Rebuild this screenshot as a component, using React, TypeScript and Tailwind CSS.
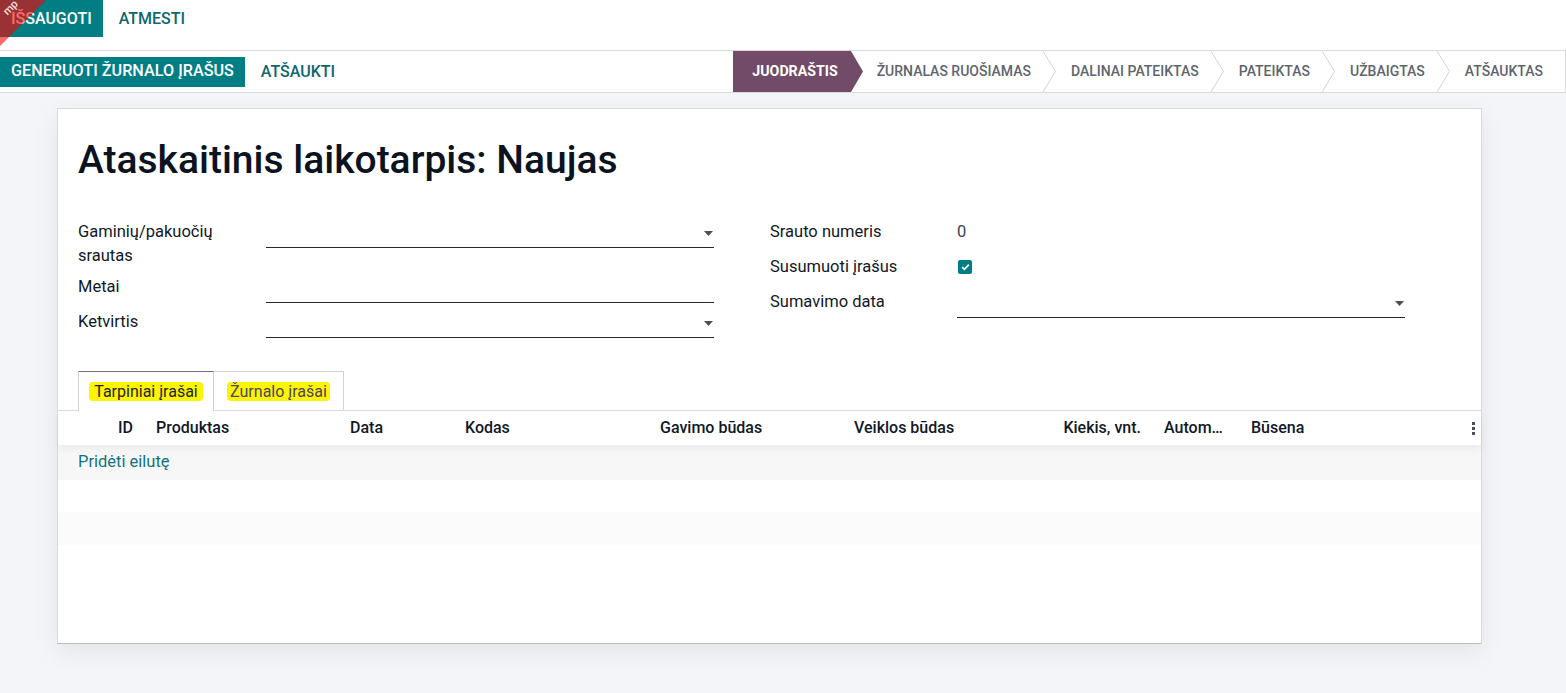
import React from "react";

function Caret() {
  return (
    <svg width="9" height="5" viewBox="0 0 9 5" className="shrink-0">
      <polygon points="0,0 9,0 4.5,5" fill="#4b5058" />
    </svg>
  );
}

function Field({ label, children, labelW }: { label: React.ReactNode; children?: React.ReactNode; labelW: string }) {
  return (
    <div className="mb-[7px] flex items-start">
      <div className={`${labelW} shrink-0 text-[16.5px] leading-[24px] text-[#111827]`}>{label}</div>
      <div className="flex-1">{children}</div>
    </div>
  );
}

function Input({ caret }: { caret?: boolean }) {
  return (
    <div className="flex h-[28px] items-center justify-end border-b border-[#1f2937] pr-[1px]">
      {caret && <Caret />}
    </div>
  );
}

export default function App() {
  const stages = ["ŽURNALAS RUOŠIAMAS", "DALINAI PATEIKTAS", "PATEIKTAS", "UŽBAIGTAS", "ATŠAUKTAS"];
  return (
    <div className="relative h-[693px] w-[1566px] overflow-hidden bg-[#f4f5f8] font-['Roboto',sans-serif] text-[#111827]">
      {/* top bar */}
      <div className="flex h-[51px] items-start border-b border-[#d8dadd] bg-white">
        <button className="h-[37px] bg-[#017e84] px-[11px] text-[16px] font-medium text-white">IŠSAUGOTI</button>
        <button className="h-[37px] px-[16px] text-[16px] font-medium text-[#0f666b]">ATMESTI</button>
      </div>

      {/* control panel */}
      <div className="flex h-[42px] items-stretch border-b border-r border-[#d8dadd] bg-white">
        <div className="flex items-center">
          <button className="h-[30px] bg-[#017e84] px-[11px] text-[16.2px] font-medium text-white">GENERUOTI ŽURNALO ĮRAŠUS</button>
          <button className="h-[30px] px-[16px] text-[16px] font-medium text-[#0f666b]">ATŠAUKTI</button>
        </div>
        <div className="ml-auto flex items-stretch pr-[22px] text-[14px] font-medium">
          <div className="flex items-center bg-[#714b67] pl-[19px] pr-[13px] text-[14.2px] font-bold text-white">JUODRAŠTIS</div>
          <svg width="12" height="41" viewBox="0 0 12 41" className="shrink-0">
            <polygon points="0,0 12,20.5 0,41" fill="#714b67" />
          </svg>
          {stages.map((s, i) => (
            <React.Fragment key={s}>
              <div className={`flex items-center ${i === 0 ? "ml-[14px]" : "ml-[15px]"} text-[#5f656d]`}>{s}</div>
              {i < stages.length - 1 && (
                <svg width="13" height="41" viewBox="0 0 13 41" className="ml-[12px] shrink-0">
                  <polyline points="0,0 12.5,20.5 0,41" fill="none" stroke="#cfd2d6" strokeWidth="1" />
                </svg>
              )}
            </React.Fragment>
          ))}
        </div>
      </div>

      {/* sheet */}
      <div className="ml-[57px] mt-[15px] flex h-[536px] w-[1425px] flex-col border border-[#d8dadd] border-b-[#bcbcbc] bg-white shadow-[0_8px_24px_rgba(0,0,0,0.07)]">
        <div className="px-[20px] pt-[27px]">
          <h1 className="text-[39px] font-medium leading-[48px] text-[#0b1220]">Ataskaitinis laikotarpis: Naujas</h1>
          <div className="mt-[36px] flex gap-[56px]">
            <div className="w-[636px]">
              <Field label={<>Gaminių/pakuočių<br />srautas</>} labelW="w-[188px]">
                <Input caret />
              </Field>
              <Field label="Metai" labelW="w-[188px]">
                <Input />
              </Field>
              <Field label="Ketvirtis" labelW="w-[188px]">
                <Input caret />
              </Field>
            </div>
            <div className="w-[635px]">
              <Field label="Srauto numeris" labelW="w-[187px]">
                <div className="h-[28px]">
                  <div className="flex h-[24px] items-center text-[16.5px] text-[#374151]">0</div>
                </div>
              </Field>
              <Field label="Susumuoti įrašus" labelW="w-[187px]">
                <div className="h-[28px]">
                  <div className="flex h-[24px] items-center pl-[1px]">
                    <div className="flex h-[14px] w-[14px] items-center justify-center rounded-[2px] bg-[#017e84]">
                      <svg width="9" height="8" viewBox="0 0 9 8">
                        <polyline points="1.2,4.2 3.4,6.3 7.8,1.6" fill="none" stroke="white" strokeWidth="1.7" />
                      </svg>
                    </div>
                  </div>
                </div>
              </Field>
              <Field label="Sumavimo data" labelW="w-[187px]">
                <Input caret />
              </Field>
            </div>
          </div>
        </div>

        {/* tabs */}
        <div className="mt-[26px] flex h-[40px] items-stretch border-b border-[#d8dadd] pl-[20px]">
          <div className="-mb-[1px] flex w-[136px] items-center justify-center border-x border-t border-[#d0d3d8] border-t-[#7d6a7a] bg-white text-[16px]">
            <span className="rounded-[4px] bg-[#fcf400] px-[5px] leading-[19px] text-[#1f2430]">Tarpiniai įrašai</span>
          </div>
          <div className="flex w-[130px] items-center justify-center border-r border-t border-[#d0d3d8] text-[16px]">
            <span className="rounded-[4px] bg-[#fcf400] px-[3px] leading-[19px] text-[#4e4568]">Žurnalo įrašai</span>
          </div>
        </div>

        {/* table */}
        <div className="relative z-10 flex h-[34px] items-center bg-white text-[16px] font-medium text-[#111827] shadow-[0_4px_8px_rgba(0,0,0,0.05)]">
          <div className="w-[60px] shrink-0" />
          <div className="w-[38px] shrink-0">ID</div>
          <div className="w-[194px] shrink-0">Produktas</div>
          <div className="w-[115px] shrink-0">Data</div>
          <div className="w-[195px] shrink-0">Kodas</div>
          <div className="w-[194px] shrink-0">Gavimo būdas</div>
          <div className="w-[150px] shrink-0">Veiklos būdas</div>
          <div className="w-[137px] shrink-0 text-right">Kiekis, vnt.</div>
          <div className="ml-[23px] w-[87px] shrink-0">Autom…</div>
          <div className="flex-1">Būsena</div>
          <div className="flex w-[9px] flex-col items-start gap-[2px]">
            <span className="h-[3px] w-[3px] bg-[#4b5058]" />
            <span className="h-[3px] w-[3px] bg-[#4b5058]" />
            <span className="h-[3px] w-[3px] bg-[#4b5058]" />
          </div>
        </div>
        <div className="flex h-[35px] items-center bg-[#f7f7f8] pl-[20px] text-[16.5px] text-[#12737a]">Pridėti eilutę</div>
        <div className="h-[32px] bg-white" />
        <div className="h-[33px] bg-[#fbfbfb]" />
        <div className="flex-1 bg-white" />
      </div>

      {/* ribbon */}
      <div className="pointer-events-none absolute left-0 top-0 z-20 h-[46px] w-[46px] overflow-hidden bg-[rgba(255,0,0,0.6)] [clip-path:polygon(0_0,100%_0,0_100%)]">
        <span className="absolute left-[3px] top-[2px] -rotate-45 text-[11px] leading-[12px] font-medium text-[#f3dede]">mp</span>
      </div>
    </div>
  );
}
